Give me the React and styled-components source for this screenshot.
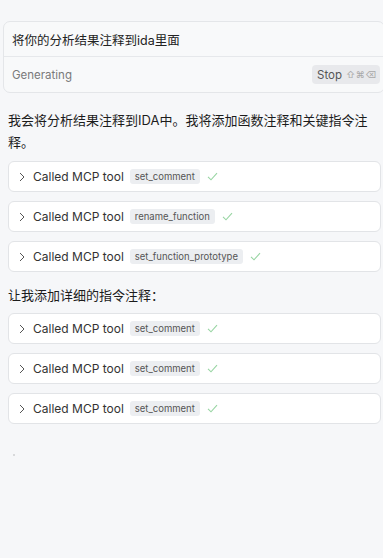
import React from "react";
import styled, { createGlobalStyle } from "styled-components";

const GlobalStyle = createGlobalStyle`
  html, body {
    margin: 0;
    padding: 0;
    background: #f6f7f9;
    overflow: hidden;
  }
  body {
    font-family: Inter, "Noto Sans CJK SC", sans-serif;
    color: #1f1f1f;
  }
`;

const Page = styled.div`
  width: 383px;
  height: 558px;
  padding-top: 21px;
  box-sizing: border-box;
`;

const InputCard = styled.div`
  margin-left: 3px;
  width: 382px;
  border: 1px solid #e4e6e9;
  border-radius: 7px;
  background: #f8f9fa;
  box-sizing: border-box;
`;

const Prompt = styled.div`
  height: 34px;
  display: flex;
  align-items: center;
  padding: 0 8px;
  font-size: 12.5px;
  color: #222;
  border-bottom: 1px solid #e6e8eb;
`;

const StatusBar = styled.div`
  height: 35px;
  display: flex;
  align-items: center;
  justify-content: space-between;
  padding: 0 4px 0 8px;
`;

const Status = styled.span`
  font-size: 11.5px;
  color: #7a7a7a;
`;

const StopButton = styled.button`
  display: flex;
  align-items: center;
  gap: 4px;
  height: 19px;
  width: 68px;
  padding: 0 5px;
  border: none;
  border-radius: 4px;
  background: #e8e9ec;
  font-family: Inter, sans-serif;
  font-size: 11.5px;
  color: #555;
`;

const Keys = styled.span`
  font-size: 9px;
  color: #a8a8a8;
  letter-spacing: 0.5px;
`;

const Content = styled.div`
  padding: 0 2px 0 8px;
`;

const Paragraph = styled.p`
  margin: ${({ $top }) => $top}px 0 ${({ $bottom }) => $bottom}px;
  font-size: 13px;
  line-height: 22px;
  color: #1c1c1c;
  padding-right: 6px;
`;

const ToolList = styled.div`
  display: flex;
  flex-direction: column;
  gap: 9px;
`;

const ToolCard = styled.div`
  height: 31px;
  display: flex;
  align-items: center;
  padding: 0 10px;
  background: #ffffff;
  border: 1px solid #e2e4e7;
  border-radius: 6px;
  box-sizing: border-box;
`;

const Chevron = styled.svg`
  width: 6px;
  height: 10px;
  margin-right: 8px;
  flex: none;
`;

const Label = styled.span`
  font-size: 12px;
  color: #333;
  margin-right: 6px;
`;

const Tag = styled.span`
  display: inline-flex;
  align-items: center;
  height: 15px;
  padding: 0 5px;
  border-radius: 3px;
  background: #eceef1;
  font-size: 9.5px;
  color: #555;
  margin-right: 7px;
`;

const Check = styled.svg`
  width: 11px;
  height: 9px;
`;

const Dot = styled.div`
  width: 2px;
  height: 2px;
  margin: 30px 0 0 5px;
  background: #d8d9db;
`;

function ToolCall({ name }) {
  return (
    <ToolCard>
      <Chevron viewBox="0 0 6 10">
        <path d="M1 1l4 4-4 4" fill="none" stroke="#555" strokeWidth="1" />
      </Chevron>
      <Label>Called MCP tool</Label>
      <Tag>{name}</Tag>
      <Check viewBox="0 0 11 9">
        <path d="M1 4.8l3 3L10 1.2" fill="none" stroke="#98d5a3" strokeWidth="1.1" />
      </Check>
    </ToolCard>
  );
}

export default function App() {
  return (
    <Page>
      <GlobalStyle />
      <InputCard>
        <Prompt>将你的分析结果注释到ida里面</Prompt>
        <StatusBar>
          <Status>Generating</Status>
          <StopButton>
            Stop <Keys>⇧⌘⌫</Keys>
          </StopButton>
        </StatusBar>
      </InputCard>
      <Content>
        <Paragraph $top={16} $bottom={8}>
          我会将分析结果注释到IDA中。我将添加函数注释和关键指令注释。
        </Paragraph>
        <ToolList>
          <ToolCall name="set_comment" />
          <ToolCall name="rename_function" />
          <ToolCall name="set_function_prototype" />
        </ToolList>
        <Paragraph $top={12} $bottom={7}>
          让我添加详细的指令注释：
        </Paragraph>
        <ToolList>
          <ToolCall name="set_comment" />
          <ToolCall name="set_comment" />
          <ToolCall name="set_comment" />
        </ToolList>
        <Dot />
      </Content>
    </Page>
  );
}
